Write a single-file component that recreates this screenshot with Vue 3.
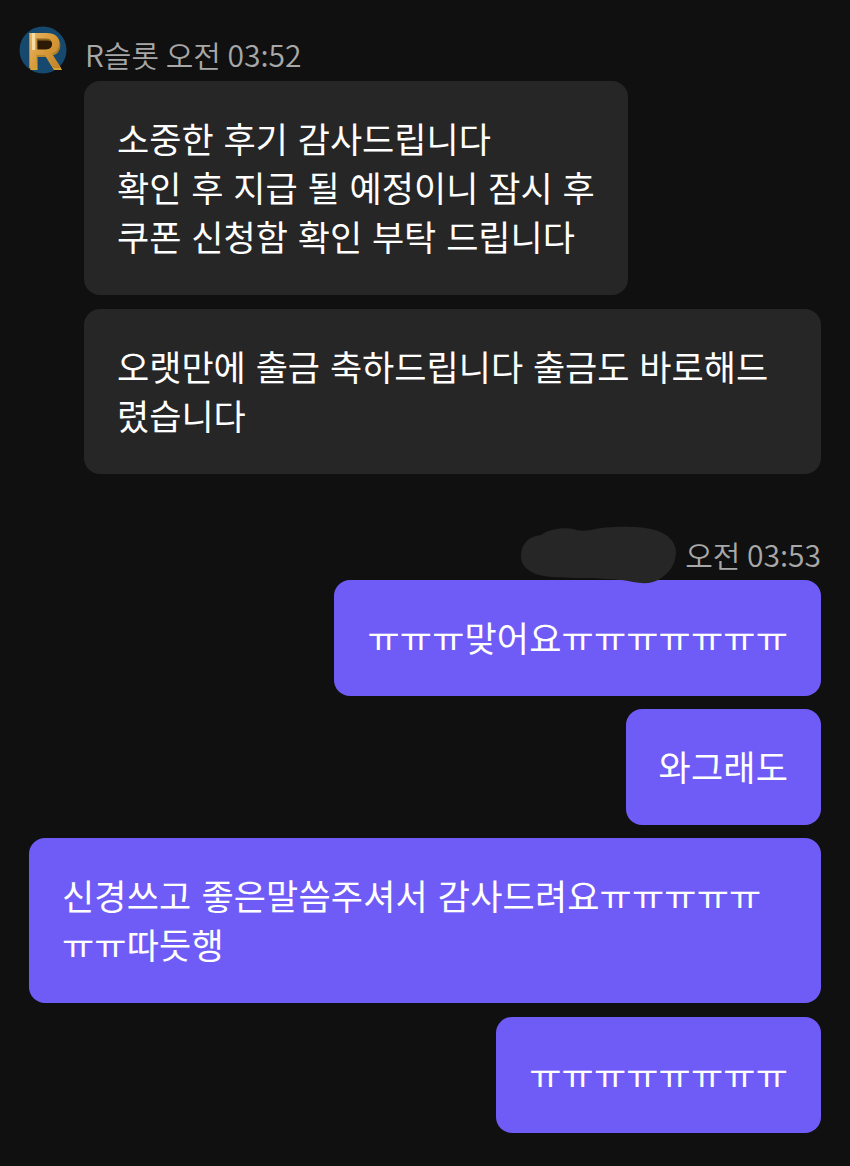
<template>
  <div class="chat">
    <div class="head">
      <svg class="avatar" viewBox="0 0 48 48" width="48" height="48">
        <defs>
          <linearGradient id="gold" x1="0" y1="0" x2="1" y2="1">
            <stop offset="0" stop-color="#f0c476" />
            <stop offset="0.5" stop-color="#d99a3a" />
            <stop offset="1" stop-color="#b87a22" />
          </linearGradient>
          <linearGradient id="edge" x1="0" y1="0" x2="0" y2="1">
            <stop offset="0" stop-color="#6b430f" />
            <stop offset="1" stop-color="#f0c040" />
          </linearGradient>
        </defs>
        <circle cx="24" cy="24" r="23.5" fill="#17496f" />
        <rect x="17" y="11" width="16" height="16" fill="#2a1a06" />
        <text x="26" y="44" text-anchor="middle" class="avatar-r" fill="url(#edge)">R</text>
        <text x="25" y="42" text-anchor="middle" class="avatar-r" fill="url(#gold)">R</text>
        <rect x="13" y="7" width="3" height="17" fill="#f6dca0" />
      </svg>
      <span class="meta">R슬롯 오전 03:52</span>
    </div>
    <div class="group left">
      <div v-for="m in received" :key="m" class="bubble gray">
        <template v-for="(line, i) in m" :key="i">{{ line }}<br v-if="i < m.length - 1" /></template>
      </div>
    </div>
    <div class="head mine">
      <svg class="blot" viewBox="0 0 156 58" width="156" height="58">
        <path d="M0 31C0 17 8 10 20 9C28 3 42 1 52 3C58 5 64 5 70 4C85 0 115 0 130 3C146 6 155 16 155 26C155 38 148 47 140 52C132 58 122 58 112 56C100 53 85 53 70 52C50 52 30 52 18 49C8 46 0 40 0 31Z" fill="#262626" />
      </svg>
      <span class="meta">오전 03:53</span>
    </div>
    <div class="group right">
      <div v-for="m in sent" :key="m" class="bubble purple">{{ m }}</div>
    </div>
  </div>
</template>

<script setup>
const received = [
  ['소중한 후기 감사드립니다', '확인 후 지급 될 예정이니 잠시 후', '쿠폰 신청함 확인 부탁 드립니다'],
  ['오랫만에 출금 축하드립니다 출금도 바로해드렸습니다'],
]

const sent = [
  'ㅠㅠㅠ맞어요ㅠㅠㅠㅠㅠㅠㅠ',
  '와그래도',
  '신경쓰고 좋은말씀주셔서 감사드려요ㅠㅠㅠㅠㅠㅠㅠ따듯행',
  'ㅠㅠㅠㅠㅠㅠㅠㅠ',
]
</script>

<style>
body {
  background: #101010;
}
</style>

<style scoped>
.chat {
  width: 850px;
  height: 1166px;
  box-sizing: border-box;
  padding: 26px 29px 0 19px;
  background: #101010;
  font-family: "Noto Sans CJK KR", "Noto Sans", sans-serif;
}

.head {
  display: flex;
  align-items: flex-start;
  height: 55px;
}

.head.mine {
  position: relative;
  justify-content: flex-end;
  height: 54px;
  margin-top: 52px;
}

.avatar {
  flex: none;
  width: 48px;
  height: 48px;
  overflow: visible;
}

.avatar-r {
  font-family: "Liberation Sans", sans-serif;
  font-weight: 700;
  font-size: 50px;
}

.blot {
  position: absolute;
  right: 144px;
  top: 0;
  z-index: 1;
}

.meta {
  margin-left: 18px;
  font-size: 30px;
  font-weight: 350;
  line-height: 56px;
  color: #a8a8a8;
  white-space: nowrap;
}

.group {
  display: flex;
  flex-direction: column;
  gap: 14px;
}

.group.left {
  align-items: flex-start;
  margin-left: 65px;
}

.group.right {
  align-items: flex-end;
  gap: 13.2px;
  margin-left: 10px;
}

.bubble {
  box-sizing: border-box;
  padding: 32px 33px 35px;
  font-size: 35px;
  word-spacing: 2px;
  line-height: 49px;
  color: #fff;
  border-radius: 16px;
  word-break: break-all;
}

.gray {
  background: #262626;
  max-width: 737px;
}

.purple {
  background: #6f5cf6;
  max-width: 792px;
  letter-spacing: 0.15px;
}
</style>
